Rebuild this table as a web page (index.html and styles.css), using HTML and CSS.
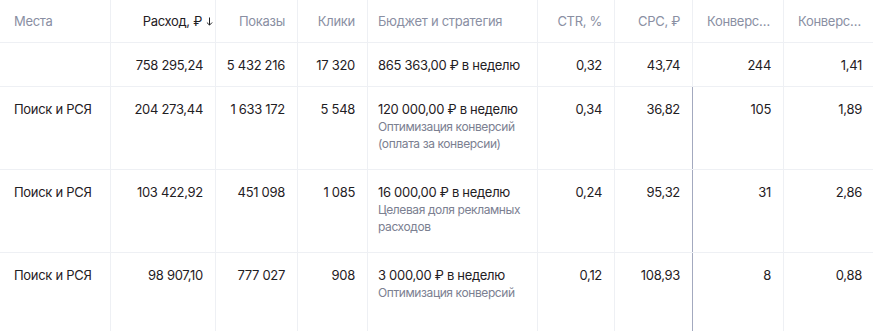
FILE: index.html
```html
<!DOCTYPE html>
<html lang="ru">
<head>
<meta charset="utf-8">
<title>Статистика</title>
<link rel="stylesheet" href="styles.css">
</head>
<body>
<div class="table">
  <div class="row head">
    <div class="cell">Места</div>
    <div class="cell num active">Расход, ₽<svg class="arrow" width="7" height="9" viewBox="0 0 7 9"><path d="M3.5 0.5V8M0.9 5.5L3.5 8.1L6.1 5.5" fill="none" stroke="currentColor" stroke-width="1"/></svg></div>
    <div class="cell num">Показы</div>
    <div class="cell num">Клики</div>
    <div class="cell budget">Бюджет и стратегия</div>
    <div class="cell num">CTR, %</div>
    <div class="cell num split">CPC, ₽</div>
    <div class="cell">Конверс…</div>
    <div class="cell">Конверс…</div>
  </div>
  <div class="row total">
    <div class="cell"></div>
    <div class="cell num">758 295,24</div>
    <div class="cell num">5 432 216</div>
    <div class="cell num">17 320</div>
    <div class="cell budget">865 363,00 ₽ в неделю</div>
    <div class="cell num">0,32</div>
    <div class="cell num split">43,74</div>
    <div class="cell num">244</div>
    <div class="cell num">1,41</div>
  </div>
  <div class="row data">
    <div class="cell">Поиск и РСЯ</div>
    <div class="cell num">204 273,44</div>
    <div class="cell num">1 633 172</div>
    <div class="cell num">5 548</div>
    <div class="cell budget">
      <div class="main">120 000,00 ₽ в неделю</div>
      <div class="sub">Оптимизация конверсий<br>(оплата за конверсии)</div>
    </div>
    <div class="cell num">0,34</div>
    <div class="cell num split">36,82</div>
    <div class="cell num">105</div>
    <div class="cell num">1,89</div>
  </div>
  <div class="row data">
    <div class="cell">Поиск и РСЯ</div>
    <div class="cell num">103 422,92</div>
    <div class="cell num">451 098</div>
    <div class="cell num">1 085</div>
    <div class="cell budget">
      <div class="main">16 000,00 ₽ в неделю</div>
      <div class="sub">Целевая доля рекламных<br>расходов</div>
    </div>
    <div class="cell num">0,24</div>
    <div class="cell num split">95,32</div>
    <div class="cell num">31</div>
    <div class="cell num">2,86</div>
  </div>
  <div class="row data">
    <div class="cell">Поиск и РСЯ</div>
    <div class="cell num">98 907,10</div>
    <div class="cell num">777 027</div>
    <div class="cell num">908</div>
    <div class="cell budget">
      <div class="main">3 000,00 ₽ в неделю</div>
      <div class="sub">Оптимизация конверсий</div>
    </div>
    <div class="cell num">0,12</div>
    <div class="cell num split">108,93</div>
    <div class="cell num">8</div>
    <div class="cell num">0,88</div>
  </div>
</div>
</body>
</html>
```

FILE: styles.css
```css
html, body {
  margin: 0;
  padding: 0;
  background: #ffffff;
  overflow: hidden;
}

body {
  font-family: Inter, Roboto, "Noto Sans", sans-serif;
  font-size: 13px;
  letter-spacing: -0.3px;
  color: #1f2024;
}

.table {
  width: 875px;
}

.row {
  display: grid;
  grid-template-columns: 111px 105px 82px 70px 170px 77px 78px 91px 91px;
  border-bottom: 1px solid #eef0f4;
}

.cell {
  box-sizing: border-box;
  border-right: 1px solid #eef0f4;
  padding: 0 12px 0 14px;
  line-height: 16px;
  white-space: nowrap;
}

.cell.num {
  text-align: right;
  padding: 0 12px 0 8px;
}

.cell.budget {
  padding-left: 10px;
}

.head {
  height: 43px;
  box-sizing: border-box;
}

.head .cell {
  display: flex;
  align-items: center;
  color: #8a8fa3;
}

.head .cell.num {
  justify-content: flex-end;
}

.head .cell.active {
  color: #1f2024;
}

.arrow {
  margin-left: 4px;
  margin-right: -10px;
  flex: none;
}

.total {
  height: 44px;
  box-sizing: border-box;
}

.total .cell {
  display: flex;
  align-items: center;
}

.total .cell.num {
  justify-content: flex-end;
}

.data {
  height: 83px;
  box-sizing: border-box;
}

.data .cell {
  padding-top: 13px;
  line-height: 18px;
}

.data .cell.split {
  border-right-color: #a3a9bf;
}

.main {
  line-height: 18px;
}

.sub {
  font-size: 12px;
  line-height: 17px;
  letter-spacing: -0.4px;
  color: #7b8091;
}
```
